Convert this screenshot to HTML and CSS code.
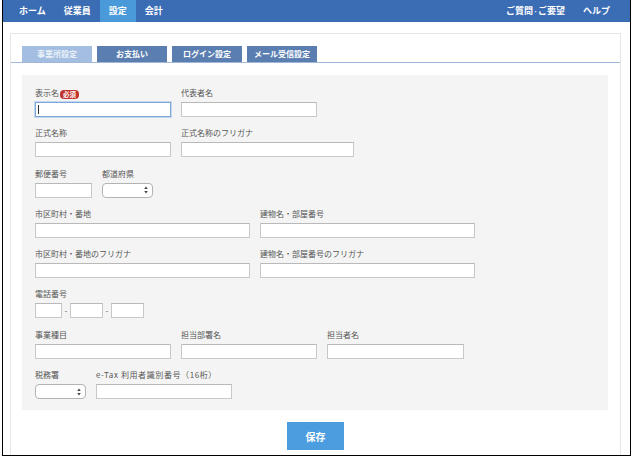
FILE: index.html
```html
<!DOCTYPE html>
<html lang="ja">
<head>
<meta charset="utf-8">
<title>事業所設定</title>
<link rel="stylesheet" href="styles.css">
</head>
<body>
<div class="frame">
  <nav class="topnav">
    <ul class="nav-list">
      <li class="nav-item">ホーム</li>
      <li class="nav-item">従業員</li>
      <li class="nav-item active">設定</li>
      <li class="nav-item">会計</li>
    </ul>
    <ul class="nav-list">
      <li class="nav-item">ご質問<span class="dot">・</span>ご要望</li>
      <li class="nav-item">ヘルプ</li>
    </ul>
  </nav>

  <main class="card">
    <div class="tabs">
      <div class="tab active">事業所設定</div>
      <div class="tab">お支払い</div>
      <div class="tab">ログイン設定</div>
      <div class="tab">メール受信設定</div>
    </div>

    <form class="panel">
      <div class="row">
        <div class="field">
          <label class="lbl">表示名<span class="req">必須</span></label>
          <span class="caret-wrap"><input class="inp w136 focus" type="text"></span>
        </div>
        <div class="field">
          <label class="lbl">代表者名</label>
          <input class="inp w136" type="text">
        </div>
      </div>

      <div class="row">
        <div class="field">
          <label class="lbl">正式名称</label>
          <input class="inp w136" type="text">
        </div>
        <div class="field">
          <label class="lbl">正式名称のフリガナ</label>
          <input class="inp w173" type="text">
        </div>
      </div>

      <div class="row">
        <div class="field">
          <label class="lbl">郵便番号</label>
          <input class="inp w57" type="text">
        </div>
        <div class="field">
          <label class="lbl">都道府県</label>
          <span class="sel w51">
            <select class="sel-box"><option></option></select>
            <svg class="sel-arrow" width="4" height="8" viewBox="0 0 4 8"><path d="M2 0.5 L3.8 3 H0.2 Z M0.2 5 H3.8 L2 7.5 Z" fill="#444"/></svg>
          </span>
        </div>
      </div>

      <div class="row">
        <div class="field">
          <label class="lbl">市区町村・番地</label>
          <input class="inp w215" type="text">
        </div>
        <div class="field">
          <label class="lbl">建物名・部屋番号</label>
          <input class="inp w215" type="text">
        </div>
      </div>

      <div class="row">
        <div class="field">
          <label class="lbl">市区町村・番地のフリガナ</label>
          <input class="inp w215" type="text">
        </div>
        <div class="field">
          <label class="lbl">建物名・部屋番号のフリガナ</label>
          <input class="inp w215" type="text">
        </div>
      </div>

      <div class="row">
        <div class="field">
          <label class="lbl">電話番号</label>
          <div class="phone">
            <input class="inp w27" type="text"><span class="sep">-</span><input class="inp w33" type="text"><span class="sep">-</span><input class="inp w33" type="text">
          </div>
        </div>
      </div>

      <div class="row">
        <div class="field">
          <label class="lbl">事業種目</label>
          <input class="inp w136" type="text">
        </div>
        <div class="field">
          <label class="lbl">担当部署名</label>
          <input class="inp w136" type="text">
        </div>
        <div class="field">
          <label class="lbl">担当者名</label>
          <input class="inp w137" type="text">
        </div>
      </div>

      <div class="row">
        <div class="field">
          <label class="lbl">税務署</label>
          <span class="sel w51">
            <select class="sel-box"><option></option></select>
            <svg class="sel-arrow" width="4" height="8" viewBox="0 0 4 8"><path d="M2 0.5 L3.8 3 H0.2 Z M0.2 5 H3.8 L2 7.5 Z" fill="#444"/></svg>
          </span>
        </div>
        <div class="field">
          <label class="lbl lbl-wide">e-Tax 利用者識別番号（16桁）</label>
          <input class="inp w136" type="text">
        </div>
      </div>
    </form>

    <div class="actions">
      <button class="save" type="button">保存</button>
    </div>
  </main>
</div>
</body>
</html>
```

FILE: styles.css
```css
* { box-sizing: border-box; }

html, body {
  margin: 0;
  padding: 0;
  background: #fff;
}

body {
  font-family: "Noto Sans CJK JP", "Noto Sans", sans-serif;
  color: #555;
}

.frame {
  width: 629px;
  height: 456px;
  margin-left: 2px;
  border: 1px solid #000;
  border-top: 0;
  overflow: hidden;
  background: #fff;
}

/* top navigation */
.topnav {
  display: flex;
  justify-content: space-between;
  height: 22px;
  background: #3b6db4;
  padding: 0 11px 0 7px;
}

.nav-list {
  list-style: none;
  margin: 0;
  padding: 0;
  display: flex;
}

.nav-item {
  padding: 0 9px;
  line-height: 22px;
  font-size: 9px;
  font-weight: 700;
  color: #fff;
  white-space: nowrap;
}

.nav-item.active { background: #4a9ad9; }

.dot {
  font-size: 5px;
  vertical-align: 1px;
}

/* card */
.card {
  display: block;
  margin: 11px 9px 0 7px;
  border: 1px solid #e6e6e6;
  padding-bottom: 30px;
}

.tabs {
  display: flex;
  gap: 5px;
  padding: 12px 11px 0;
  border-bottom: 1px solid #9fb6d9;
}

.tab {
  width: 70px;
  height: 16px;
  line-height: 16px;
  text-align: center;
  font-size: 8px;
  font-weight: 700;
  color: #fff;
  background: #5a7eb0;
}

.tab.active {
  background: #a3bee1;
  color: #eaf1f9;
}

/* form panel */
.panel {
  margin: 12px 12px 0 11px;
  background: #f4f4f4;
  padding: 12px 13px 11px;
}

.row {
  display: flex;
  gap: 10px;
  align-items: flex-end;
}

.row + .row { margin-top: 10.3px; }

.field {
  display: flex;
  flex-direction: column;
}

.lbl {
  display: block;
  height: 12px;
  line-height: 12px;
  font-size: 8px;
  margin-bottom: 3px;
  white-space: nowrap;
  color: #555;
}

.lbl-wide { letter-spacing: 0.6px; }

.req {
  display: inline-block;
  margin-left: 1px;
  padding: 0 3px;
  height: 9px;
  line-height: 9px;
  font-size: 6.5px;
  font-weight: 700;
  color: #fff;
  background: #c0342c;
  border-radius: 4px;
  vertical-align: -1px;
}

.inp {
  display: block;
  height: 15px;
  margin: 0;
  padding: 0 3px;
  border: 1px solid #c8c8c8;
  border-top-color: #b9b9b9;
  background: #fff;
  font-size: 8px;
  outline: none;
}

.inp.focus {
  border-color: #7ea8db;
  box-shadow: 0 0 0 1px #c3d7ef;
}

.caret-wrap {
  position: relative;
  display: block;
}

.caret-wrap::after {
  content: "";
  position: absolute;
  left: 3px;
  top: 3px;
  width: 1px;
  height: 9px;
  background: #333;
}

.w27 { width: 27px; }
.w33 { width: 33px; }
.w51 { width: 51px; }
.w57 { width: 57px; }
.w136 { width: 136px; }
.w137 { width: 137px; }
.w173 { width: 173px; }
.w215 { width: 215px; }

.phone {
  display: flex;
  align-items: center;
}

.sep {
  width: 8px;
  text-align: center;
  font-size: 8px;
  line-height: 15px;
  color: #555;
}

/* select */
.sel {
  position: relative;
  display: block;
  height: 15px;
}

.sel-box {
  appearance: none;
  -webkit-appearance: none;
  display: block;
  width: 100%;
  height: 15px;
  margin: 0;
  padding: 0;
  border: 1px solid #b3b3b3;
  border-radius: 4px;
  background: #fff;
  font-size: 8px;
  outline: none;
}

.sel-arrow {
  position: absolute;
  right: 5px;
  top: 3.5px;
}

/* actions */
.actions {
  display: flex;
  justify-content: center;
  padding-top: 12px;
}

.save {
  width: 57px;
  height: 28px;
  border: 0;
  margin: 0;
  padding: 0;
  background: #4b9ddf;
  color: #fff;
  font-family: inherit;
  font-size: 10px;
  font-weight: 700;
}
```
